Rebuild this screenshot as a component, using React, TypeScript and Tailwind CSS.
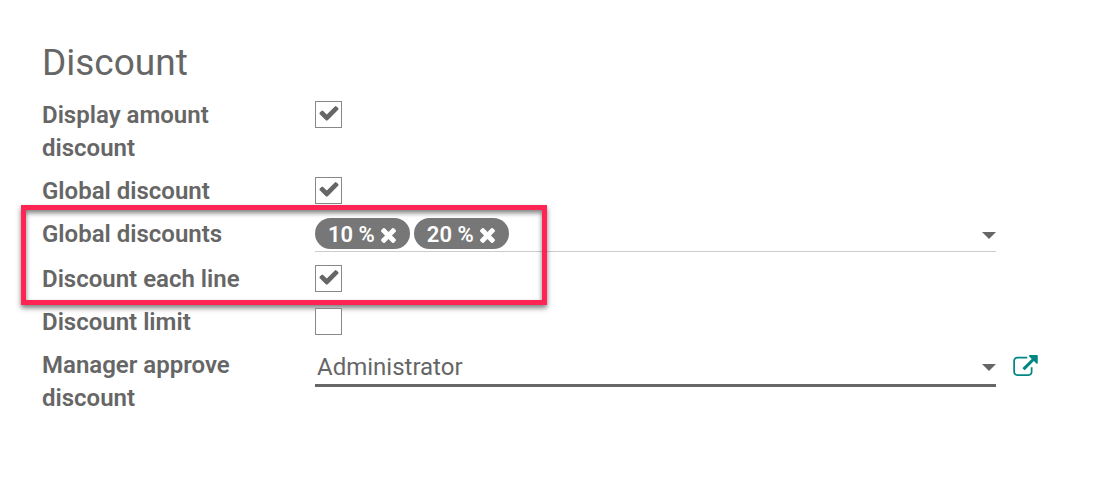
import { useId, useState, type ReactNode } from "react";

const CHECK =
  "M1671 566q0 40-28 68l-724 724-136 136q-28 28-68 28t-68-28l-136-136-362-362q-28-28-28-68t28-68l136-136q28-28 68-28t68 28l294 295 656-657q28-28 68-28t68 28l136 136q28 28 28 68z";
const TIMES =
  "M1490 1322q0 40-28 68l-136 136q-28 28-68 28t-68-28l-294-294-294 294q-28 28-68 28t-68-28l-136-136q-28-28-28-68t28-68l294-294-294-294q-28-28-28-68t28-68l136-136q28-28 68-28t68 28l294 294 294-294q28-28 68-28t68 28l136 136q28 28 28 68t-28 68l-294 294 294 294q28 28 28 68z";
const EXTERNAL =
  "M1408 928v320q0 119-84.5 203.5t-203.5 84.5h-832q-119 0-203.5-84.5t-84.5-203.5v-832q0-119 84.5-203.5t203.5-84.5h704q14 0 23 9t9 23v64q0 14-9 23t-23 9h-704q-66 0-113 47t-47 113v832q0 66 47 113t113 47h832q66 0 113-47t47-113v-320q0-14 9-23t23-9h64q14 0 23 9t9 23zm384-864v512q0 26-19 45t-45 19-45-19l-176-176-652 652q-10 10-23 10t-23-10l-114-114q-10-10-10-23t10-23l652-652-176-176q-19-19-19-45t19-45 45-19h512q26 0 45 19t19 45z";

function Caret() {
  return (
    <svg viewBox="0 0 14 7" className="h-[7px] w-3.5 fill-[#666]" aria-hidden="true">
      <path d="M0 0h14L7 7z" />
    </svg>
  );
}

function Row({ id, label, children }: { id: string; label: string; children: ReactNode }) {
  return (
    <div className="flex items-start">
      <div className="w-[273px] shrink-0 pt-px pr-12">
        <label htmlFor={id} className="-mb-px block font-semibold">
          {label}
        </label>
      </div>
      <div className="min-w-0 flex-1">{children}</div>
    </div>
  );
}

function CheckRow({ label, initial }: { label: string; initial: boolean }) {
  const id = useId();
  const [checked, setChecked] = useState(initial);
  return (
    <Row id={id} label={label}>
      <span className="relative flex h-[33px] w-[27px] items-center">
        <input
          id={id}
          type="checkbox"
          checked={checked}
          onChange={(e) => setChecked(e.target.checked)}
          className="size-[27px] appearance-none border border-[#888] bg-white"
        />
        {checked && (
          <svg
            viewBox="0 0 1792 1792"
            className="pointer-events-none absolute inset-x-0 top-1 mx-auto size-[22px] fill-[#666]"
            aria-hidden="true"
          >
            <path d={CHECK} />
          </svg>
        )}
      </span>
    </Row>
  );
}

function Discounts() {
  const id = useId();
  const [tags, setTags] = useState(["10 %", "20 %"]);
  return (
    <Row id={id} label="Global discounts">
      <div className="mr-[109px] flex h-[35px] items-center gap-1 border-b border-[#ccc] pb-0.5">
        {tags.map((tag) => (
          <span
            key={tag}
            className="flex h-[31px] items-center gap-1.5 rounded-full bg-[#777] pr-3.5 pl-[13px] pt-0.5 text-[22px] font-semibold text-white"
          >
            {tag}
            <button type="button" aria-label={`Remove ${tag}`} onClick={() => setTags(tags.filter((t) => t !== tag))}>
              <svg viewBox="302 366 1188 1188" className="mt-0.5 size-[15px] fill-white" aria-hidden="true">
                <path d={TIMES} />
              </svg>
            </button>
          </span>
        ))}
        <input id={id} type="text" className="min-w-0 flex-1 bg-transparent outline-none" />
        <button type="button" aria-label="Show discounts" className="pt-1">
          <Caret />
        </button>
      </div>
    </Row>
  );
}

function Manager() {
  const id = useId();
  return (
    <Row id={id} label="Manager approve discount">
      <div className="flex items-start gap-[17px] pr-[67px]">
        <div className="relative min-w-0 flex-1">
          <select
            id={id}
            defaultValue="Administrator"
            className="block h-[39px] w-full appearance-none border-b-3 border-[#666] bg-transparent px-0.5 pt-0.5 outline-none"
          >
            <option>Administrator</option>
          </select>
          <span className="pointer-events-none absolute inset-y-0 right-0 flex items-center">
            <Caret />
          </span>
        </div>
        <a href="#administrator" aria-label="Open Administrator" className="flex w-[25px] pt-[7px]">
          <svg viewBox="0 0 1792 1536" className="h-[21px] w-[25px] fill-[#008784]" aria-hidden="true">
            <path d={EXTERNAL} />
          </svg>
        </a>
      </div>
    </Row>
  );
}

export default function App() {
  return (
    <main className="min-h-screen bg-white px-[42px] pt-10 pr-0 pb-12 font-[Roboto,sans-serif] text-[24px] leading-[33px] text-[#666]">
      <h1 className="mb-3 text-[37px] leading-[46px]">Discount</h1>
      <form className="flex flex-col gap-2.5">
        <CheckRow label="Display amount discount" initial />
        <CheckRow label="Global discount" initial />
        <div className="relative flex flex-col gap-2.5">
          <Discounts />
          <CheckRow label="Discount each line" initial />
          <div className="pointer-events-none absolute -top-3 -bottom-2.5 -left-[21px] w-[526px] border-5 border-[#ff2453] shadow-[0_3px_5px_rgba(0,0,0,0.5),inset_0_3px_5px_rgba(0,0,0,0.5)]" />
        </div>
        <CheckRow label="Discount limit" initial={false} />
        <Manager />
      </form>
    </main>
  );
}
